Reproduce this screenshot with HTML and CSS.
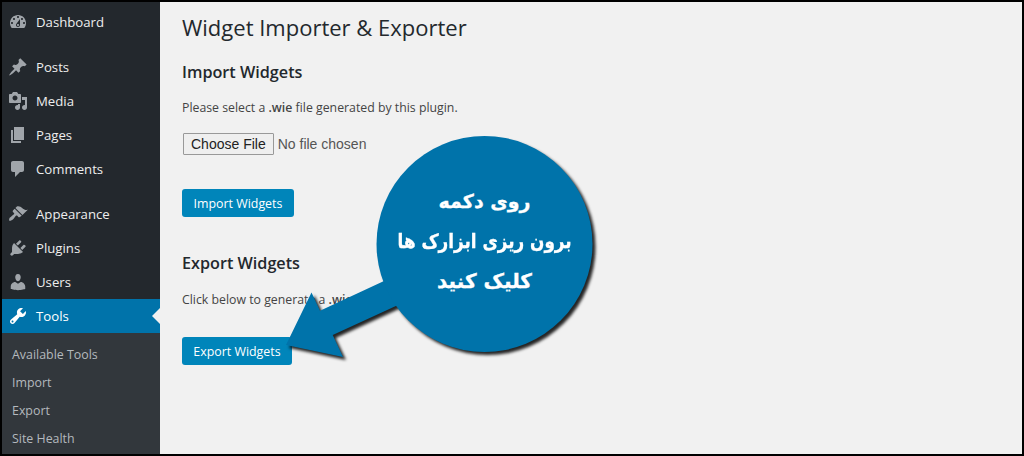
FILE: index.html
```html
<!DOCTYPE html>
<html lang="en">

<head>
  <meta charset="UTF-8">
  <title>Widget Importer &amp; Exporter</title>
  <link rel="stylesheet" href="styles.css">
</head>

<body>
  <div class="sidebar">
    <a class="menu-item"><svg class="icon" viewBox="0 0 20 20"><path d="M3.76 16h12.48c1.1-1.37 1.76-3.11 1.76-5 0-4.42-3.58-8-8-8s-8 3.58-8 8c0 1.89.66 3.63 1.76 5zM10 4c.55 0 1 .45 1 1s-.45 1-1 1-1-.45-1-1 .45-1 1-1zM6 6c.55 0 1 .45 1 1s-.45 1-1 1-1-.45-1-1 .45-1 1-1zm8 0c.55 0 1 .45 1 1s-.45 1-1 1-1-.45-1-1 .45-1 1-1zm-5.37 5.55L12 7v6c0 1.1-.9 2-2 2s-2-.9-2-2c0-.57.24-1.08.63-1.45zM4 10c.55 0 1 .45 1 1s-.45 1-1 1-1-.45-1-1 .45-1 1-1zm12 0c.55 0 1 .45 1 1s-.45 1-1 1-1-.45-1-1 .45-1 1-1zm-5 3c0-.55-.45-1-1-1s-1 .45-1 1 .45 1 1 1 1-.45 1-1z"/></svg>Dashboard</a>
    <div class="separator"></div>
    <a class="menu-item"><svg class="icon" viewBox="0 0 20 20"><path d="M10.44 3.02l1.82-1.82 6.36 6.35-1.83 1.82c-1.05-.68-2.48-.57-3.41.36l-.75.75c-.92.93-1.04 2.35-.35 3.41l-1.83 1.82-2.41-2.41-2.8 2.79c-.42.42-3.38 2.71-3.8 2.29s1.86-3.39 2.28-3.81l2.79-2.79L4.1 9.36l1.83-1.82c1.05.69 2.48.57 3.4-.36l.75-.75c.93-.92 1.05-2.35.36-3.41z"/></svg>Posts</a>
    <a class="menu-item"><svg class="icon" viewBox="0 0 20 20"><path d="M13 11V4c0-.55-.45-1-1-1h-1.67L9 1H5L3.67 3H2c-.55 0-1 .45-1 1v7c0 .55.45 1 1 1h10c.55 0 1-.45 1-1zM7 4.5c1.38 0 2.5 1.12 2.5 2.5S8.38 9.5 7 9.5 4.5 8.38 4.5 7 5.62 4.5 7 4.5zM14 6h5v10.5c0 1.38-1.12 2.5-2.5 2.5S14 17.88 14 16.5s1.12-2.5 2.5-2.5c.17 0 .34.02.5.05V9h-3V6zm-4 8.05V13h2v3.5c0 1.38-1.12 2.5-2.5 2.5S7 17.88 7 16.5 8.12 14 9.5 14c.17 0 .34.02.5.05z"/></svg>Media</a>
    <a class="menu-item"><svg class="icon" viewBox="0 0 20 20"><path d="M6 15V2h10v13H6zm-1 1h8v2H3V5h2v11z"/></svg>Pages</a>
    <a class="menu-item"><svg class="icon" viewBox="0 0 20 20"><path d="M5 2h9c1.1 0 2 .9 2 2v7c0 1.1-.9 2-2 2h-2l-5 5v-5H5c-1.1 0-2-.9-2-2V4c0-1.1.9-2 2-2z"/></svg>Comments</a>
    <div class="separator"></div>
    <a class="menu-item"><svg class="icon" viewBox="0 0 20 20"><path d="M14.48 11.06L7.41 3.99l1.5-1.5c.5-.56 2.3-.47 3.51.32 1.21.8 1.43 1.28 2.91 2.1 1.18.64 2.45 1.26 4.45.85zm-.71.71L6.7 4.7 4.93 6.47c-.39.39-.39 1.02 0 1.41l1.06 1.06c.39.39.39 1.03 0 1.42-.6.6-1.43 1.11-2.21 1.69-.35.26-.7.53-1.01.84C1.43 13.23.78 15.6 1.21 16.7c.5.5 2.85-.15 4.19-1.64.28-.3.55-.65.81-1 .58-.78 1.09-1.61 1.69-2.21.39-.39 1.03-.39 1.42 0l1.06 1.06c.39.39 1.02.39 1.41 0z"/></svg>Appearance</a>
    <a class="menu-item"><svg class="icon" viewBox="0 0 20 20"><path d="M13.11 4.36L9.87 7.6 8 5.73l3.24-3.24c.35-.34 1.05-.2 1.56.32.52.51.66 1.21.31 1.55zm-8 1.77l.91-1.12 9.01 9.01-1.19.84c-.71.71-2.63 1.16-3.82 1.16H6.14L4.9 17.26c-.59.59-1.54.59-2.12 0-.59-.58-.59-1.53 0-2.12l1.24-1.24v-3.88c0-1.13.4-3.19 1.09-3.89zm7.26 3.97l3.24-3.24c.34-.35 1.04-.21 1.55.31.52.51.66 1.21.31 1.55l-3.24 3.25z"/></svg>Plugins</a>
    <a class="menu-item"><svg class="icon" viewBox="0 0 20 20"><path d="M10 9.25c-2.27 0-2.73-3.44-2.73-3.44C7 4.02 7.82 2 9.97 2c2.16 0 2.98 2.02 2.71 3.81 0 0-.41 3.44-2.68 3.44zm0 2.57L12.72 10c2.39 0 4.52 2.33 4.52 4.53v2.49s-3.65 1.13-7.24 1.13c-3.65 0-7.24-1.13-7.24-1.13v-2.49c0-2.25 1.94-4.48 4.47-4.48z"/></svg>Users</a>
    <a class="menu-item active"><svg class="icon" viewBox="0 0 20 20"><path d="M16.68 9.77c-1.34 1.34-3.3 1.67-4.95.99l-5.41 6.52c-.99.99-2.59.99-3.58 0s-.99-2.59 0-3.57l6.52-5.42c-.68-1.65-.35-3.61.99-4.95 1.28-1.28 3.12-1.62 4.72-1.06l-2.89 2.89 2.82 2.82 2.86-2.87c.53 1.58.18 3.39-1.08 4.65zM3.81 16.21c.4.39 1.04.39 1.43 0 .4-.4.4-1.04 0-1.43-.39-.4-1.03-.4-1.43 0-.39.39-.39 1.03 0 1.43z"/></svg>Tools</a>
    <div class="submenu">
      <a class="sub-item">Available Tools</a>
      <a class="sub-item">Import</a>
      <a class="sub-item">Export</a>
      <a class="sub-item">Site Health</a>
    </div>
  </div>

  <div class="content">
    <h1>Widget Importer &amp; Exporter</h1>

    <h2>Import Widgets</h2>
    <p>Please select a <b>.wie</b> file generated by this plugin.</p>
    <input class="file-input" type="file">
    <a class="button import-button">Import Widgets</a>

    <h2 class="export-title">Export Widgets</h2>
    <p class="export-note">Click below to generate a <b>.wie</b> file for all active widgets.</p>
    <a class="button export-button">Export Widgets</a>
  </div>

  <!-- callout drawn over the page -->
  <svg class="callout-art" viewBox="0 0 1024 456">
    <g class="callout-shape">
      <path d="M286 345L311.5 292.5 320 310.7 384 281 398 305 332.7 335 343 357z"/>
      <circle cx="484.5" cy="244" r="108"/>
    </g>
  </svg>
  <div class="callout-text" dir="rtl" lang="fa">
    <span>روی دکمه</span>
    <span class="callout-long">برون ریزی ابزارک ها</span>
    <span class="callout-last">کلیک کنید</span>
  </div>
</body>

</html>
```

FILE: styles.css
```css
html {
  background: #000;
}

body {
  box-sizing: border-box;
  display: flex;
  width: 1024px;
  height: 456px;
  margin: 0;
  border: 2px solid #000;
  overflow: hidden;
  font-family: "Open Sans", "Liberation Sans", sans-serif;
  font-size: 13px;
  color: #444;
  background: #f1f1f1;
}

.sidebar {
  display: flex;
  flex-direction: column;
  flex: none;
  width: 158px;
  padding-top: 3px;
  background: #23282d;
}

.menu-item {
  display: flex;
  align-items: center;
  flex: none;
  position: relative;
  height: 34px;
  padding-left: 6px;
  font-size: 13.2px;
  color: #eee;
}

.icon {
  flex: none;
  width: 20px;
  height: 20px;
  margin-right: 8px;
  fill: #a0a5aa;
}

.separator {
  flex: none;
  height: 11px;
}

.menu-item.active {
  color: #fff;
  background: #0073aa;
}

.menu-item.active .icon {
  fill: #fff;
}

.menu-item.active::after {
  content: "";
  position: absolute;
  right: 0;
  top: 9px;
  border: 8px solid transparent;
  border-right-color: #f1f1f1;
  border-left-width: 0;
}

.submenu {
  flex: 1;
  padding-top: 7px;
  background: #32373c;
}

.sub-item {
  display: flex;
  align-items: center;
  height: 28px;
  padding-left: 10px;
  font-size: 12.4px;
  color: #b4b9be;
}

.content {
  flex: 1;
  padding: 0 22px;
}

h1 {
  margin: 9px 0 0;
  font-size: 22px;
  font-weight: 400;
  line-height: 32px;
  color: #23282d;
}

h2 {
  margin: 17px 0 0;
  font-size: 16.2px;
  font-weight: 600;
  line-height: 24px;
  color: #23282d;
}

p {
  margin: 14px 0 0;
  font-size: 12.3px;
  line-height: 20px;
}

p b {
  font-weight: 600;
}

.file-input {
  display: block;
  margin: 15px 0 0 1px;
  font-family: "Liberation Sans", Arial, sans-serif;
  font-size: 14px;
  color: #555;
}

.file-input::file-selector-button {
  height: 22px;
  padding: 0 7px;
  margin-right: 4px;
  font: inherit;
  color: #222;
  background: #efefef;
  border: 1px solid #999;
  border-radius: 1px;
}

.button {
  display: flex;
  align-items: center;
  justify-content: center;
  height: 28px;
  font-size: 12.4px;
  color: #fff;
  background: #0085ba;
  border-radius: 3px;
}

.import-button {
  width: 112px;
  margin-top: 34px;
}

.export-title {
  margin-top: 34px;
}

.export-note {
  margin-top: 15px;
}

.export-button {
  width: 110px;
  margin-top: 27px;
}

.callout-art {
  position: absolute;
  left: 0;
  top: 0;
  width: 1024px;
  height: 456px;
}

.callout-shape {
  fill: #0073aa;
  filter: drop-shadow(3px 3px 1.5px rgba(0, 0, 0, 0.85));
}

.callout-text {
  position: absolute;
  left: 377px;
  top: 185px;
  display: flex;
  flex-direction: column;
  align-items: center;
  gap: 8px;
  width: 215px;
  font-family: "DejaVu Sans", sans-serif;
  font-size: 19px;
  font-weight: 700;
  line-height: 32px;
  color: #fff;
  -webkit-text-stroke: 0.3px #fff;
}

.callout-long {
  font-size: 20px;
  white-space: nowrap;
  transform: scaleX(0.84);
}

.callout-last {
  font-size: 20px;
}
```
